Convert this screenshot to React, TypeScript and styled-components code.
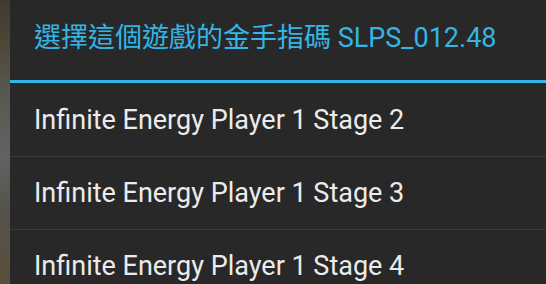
import React from "react";
import styled, { createGlobalStyle } from "styled-components";

const Global = createGlobalStyle`
  html, body { margin: 0; padding: 0; background: #282828; }
  body { width: 546px; height: 284px; overflow: hidden; }
`;

const Screen = styled.div`
  display: flex;
  width: 546px;
  height: 284px;
  overflow: hidden;
`;

const Backdrop = styled.div`
  width: 10px;
  flex: none;
  background: linear-gradient(
    180deg,
    #3f3a2e 0%,
    #4c4838 15%,
    #5a5a52 35%,
    #626262 55%,
    #55524a 75%,
    #5a4f3c 100%
  );
`;

const Dialog = styled.div`
  flex: 1;
  display: flex;
  flex-direction: column;
  background: #282828;
  overflow: hidden;
`;

const Title = styled.div`
  height: 80px;
  flex: none;
  display: flex;
  align-items: center;
  padding: 0 24px 10px 24px;
  box-sizing: border-box;
  color: #33b5e5;
  font-family: Roboto, "Noto Sans CJK TC", sans-serif;
  font-size: 27px;
  white-space: nowrap;
`;

const TitleRule = styled.div`
  height: 3px;
  flex: none;
  background: #33b5e5;
`;

const List = styled.div`
  flex: none;
  display: flex;
  flex-direction: column;
`;

const Row = styled.div<{ $first?: boolean }>`
  height: ${(p) => (p.$first ? 73 : 72)}px;
  flex: none;
  display: flex;
  align-items: center;
  padding: 0 24px;
  border-bottom: 1px solid #3b3b3b;
  color: #ebebeb;
  font-family: Roboto, sans-serif;
  font-size: 27px;
  white-space: nowrap;
`;

const items = [
  "Infinite Energy Player 1 Stage 2",
  "Infinite Energy Player 1 Stage 3",
  "Infinite Energy Player 1 Stage 4",
];

export default function App() {
  return (
    <>
      <Global />
      <Screen>
        <Backdrop />
        <Dialog>
          <Title>選擇這個遊戲的金手指碼 SLPS_012.48</Title>
          <TitleRule />
          <List>
            {items.map((t, i) => (
              <Row key={t} $first={i === 0}>
                {t}
              </Row>
            ))}
          </List>
        </Dialog>
      </Screen>
    </>
  );
}
